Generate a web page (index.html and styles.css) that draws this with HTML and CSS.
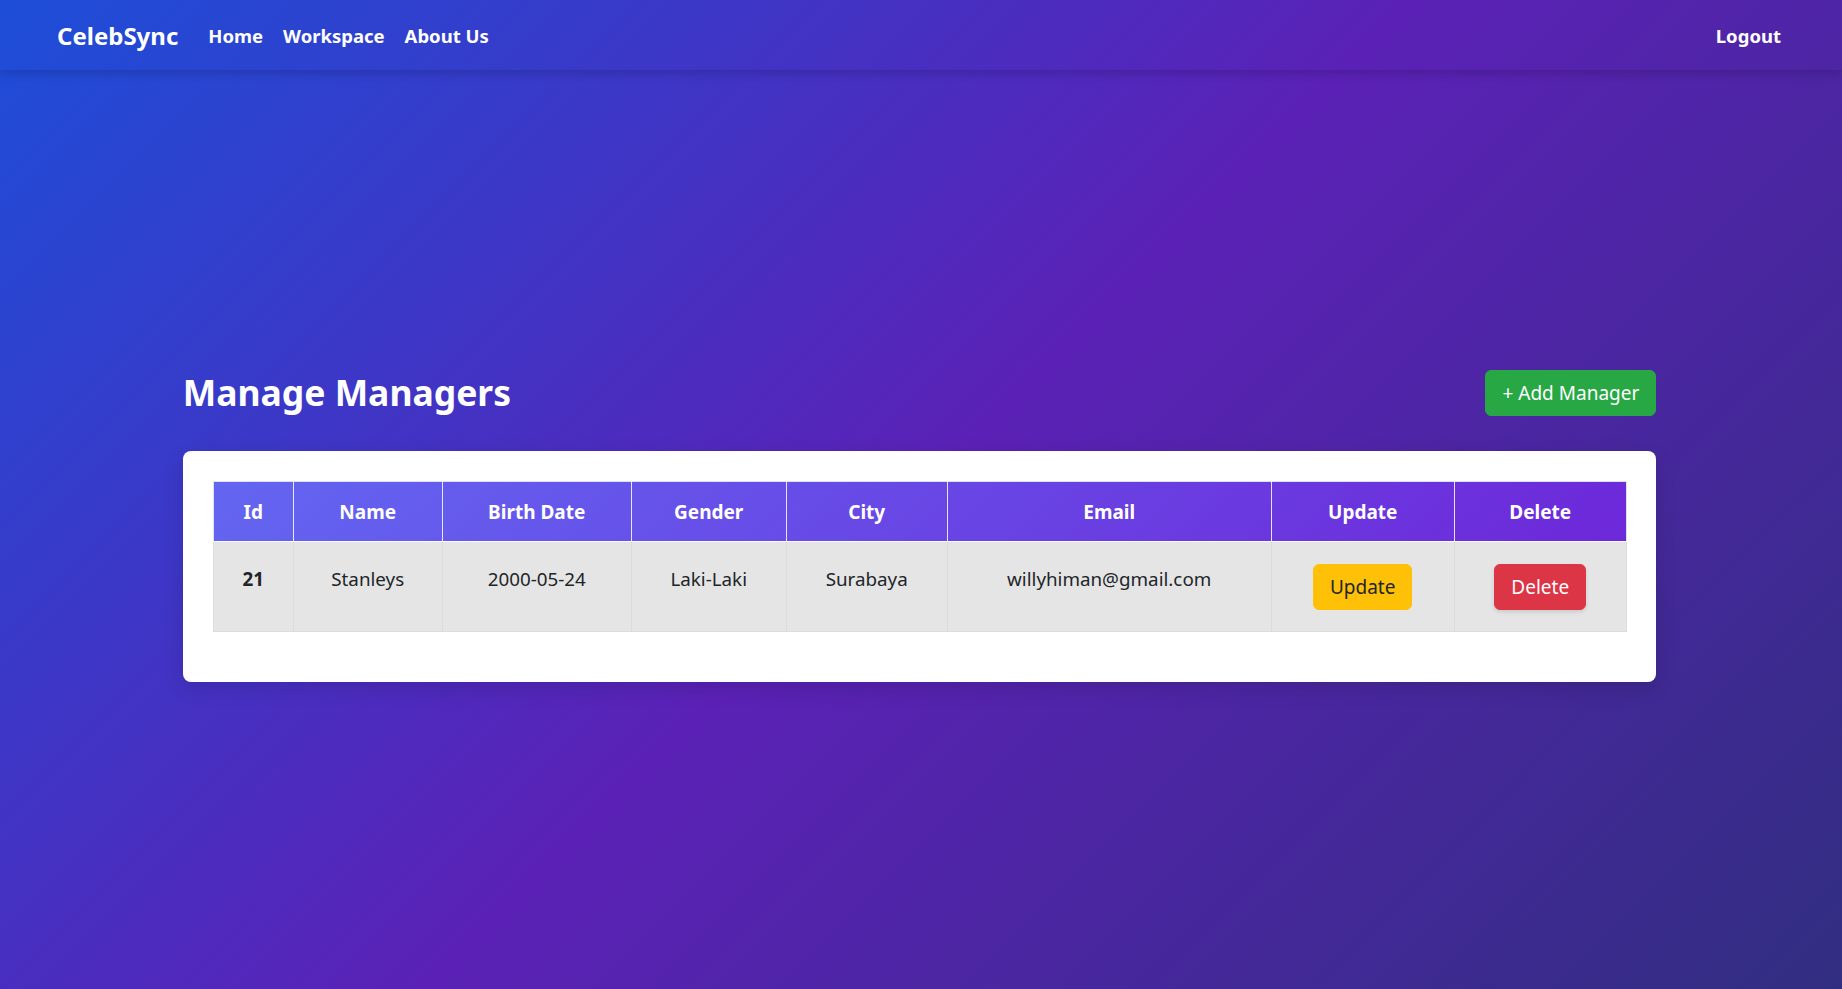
FILE: index.html
```html
<!DOCTYPE html>
<html lang="en">
<head>
    <meta charset="UTF-8">
    <meta name="viewport" content="width=device-width, initial-scale=1.0">
    <title>CelebSync - Manage Managers</title>
    <link rel="stylesheet" href="styles.css">
</head>
<body>
    <nav class="navbar">
        <div class="nav-left">
            <a class="brand" href="#">CelebSync</a>
            <a class="nav-link" href="#">Home</a>
            <a class="nav-link" href="#">Workspace</a>
            <a class="nav-link" href="#">About Us</a>
        </div>
        <a class="nav-link logout" href="#">Logout</a>
    </nav>

    <main class="page">
        <div class="content">
            <div class="page-head">
                <h1>Manage Managers</h1>
                <button class="btn btn-lg btn-success">+ Add Manager</button>
            </div>

            <div class="card">
                <table class="table">
                    <thead>
                        <tr>
                            <th class="col-id">Id</th>
                            <th class="col-name">Name</th>
                            <th class="col-birth">Birth Date</th>
                            <th class="col-gender">Gender</th>
                            <th class="col-city">City</th>
                            <th class="col-email">Email</th>
                            <th class="col-update">Update</th>
                            <th class="col-delete">Delete</th>
                        </tr>
                    </thead>
                    <tbody>
                        <tr>
                            <th>21</th>
                            <td>Stanleys</td>
                            <td>2000-05-24</td>
                            <td>Laki-Laki</td>
                            <td>Surabaya</td>
                            <td>willyhiman@gmail.com</td>
                            <td><button class="btn btn-warning">Update</button></td>
                            <td><button class="btn btn-danger">Delete</button></td>
                        </tr>
                    </tbody>
                </table>
            </div>
        </div>
    </main>
</body>
</html>
```

FILE: styles.css
```css
* {
    box-sizing: border-box;
}

html, body {
    margin: 0;
    padding: 0;
}

body {
    font-family: "Noto Sans", "Open Sans", sans-serif;
    font-size: 20px;
    line-height: 1.5;
    color: #212529;
    min-height: 100vh;
    background: linear-gradient(135deg, #1d4ed8 0%, #5b21b6 50%, #312e81 100%);
}

a {
    text-decoration: none;
}

/* top bar */
.navbar {
    height: 70px;
    display: flex;
    align-items: center;
    justify-content: space-between;
    padding: 2px 61px 0 57px;
    box-shadow: 0 3px 10px rgba(0, 0, 0, 0.18);
}

.nav-left {
    display: flex;
    align-items: center;
}

.brand {
    color: #fff;
    font-weight: 700;
    font-size: 24px;
    margin-right: 20px;
}

.nav-link {
    color: #fff;
    font-weight: 700;
    font-size: 18.5px;
    padding: 0 10px;
}

.logout {
    padding: 0;
}

/* main area */
.page {
    min-height: calc(100vh - 70px);
    display: flex;
    align-items: center;
    justify-content: center;
    padding-bottom: 8px;
}

.content {
    width: 80%;
    margin-right: 3px;
}

.page-head {
    display: flex;
    align-items: center;
    justify-content: space-between;
    margin-bottom: 35px;
}

.page-head h1 {
    margin: 0;
    color: #fff;
    font-size: 35.5px;
    font-weight: 700;
    line-height: 1.2;
}

.btn {
    font-family: inherit;
    font-size: 19px;
    line-height: 28px;
    padding: 8px 16px;
    border: 1px solid transparent;
    border-radius: 6px;
    cursor: pointer;
}

.btn-success {
    background-color: #28a745;
    border-color: #28a745;
    color: #fff;
}

.btn-warning {
    background-color: #ffc107;
    border-color: #ffc107;
    color: #212529;
}

.btn-danger {
    background-color: #dc3545;
    border-color: #dc3545;
    color: #fff;
    box-shadow: 0 2px 4px rgba(0, 0, 0, 0.12);
}

.card {
    background-color: #fff;
    border-radius: 8px;
    padding: 30px 30px 34px;
    box-shadow: 0 6px 20px rgba(0, 0, 0, 0.12);
}

/* table */
.table {
    width: 100%;
    table-layout: fixed;
    border-collapse: collapse;
    margin-bottom: 16px;
    font-size: 18.8px;
}

.table thead tr {
    background: linear-gradient(135deg, #6366f1, #6d28d9);
}

.table thead th {
    color: #fff;
    font-size: 19px;
    font-weight: 700;
    height: 60px;
    padding: 3px 10px 0;
    text-align: center;
    vertical-align: middle;
    border: 1px solid rgba(255, 255, 255, 0.85);
    border-top-color: #dee2e6;
}

.table thead th:first-child {
    border-left-color: #dee2e6;
}

.table thead th:last-child {
    border-right-color: #dee2e6;
}

.table tbody th,
.table tbody td {
    background-color: #e5e5e5;
    padding: 22px 10px 21px;
    line-height: 30px;
    text-align: center;
    vertical-align: top;
    border: 1px solid #dcdcdc;
    font-weight: 400;
}

.table tbody th {
    font-weight: 700;
}

.col-id { width: 80px; }
.col-name { width: 149px; }
.col-birth { width: 189px; }
.col-gender { width: 155px; }
.col-city { width: 161px; }
.col-email { width: 324px; }
.col-update { width: 183px; }
.col-delete { width: 172px; }
```
